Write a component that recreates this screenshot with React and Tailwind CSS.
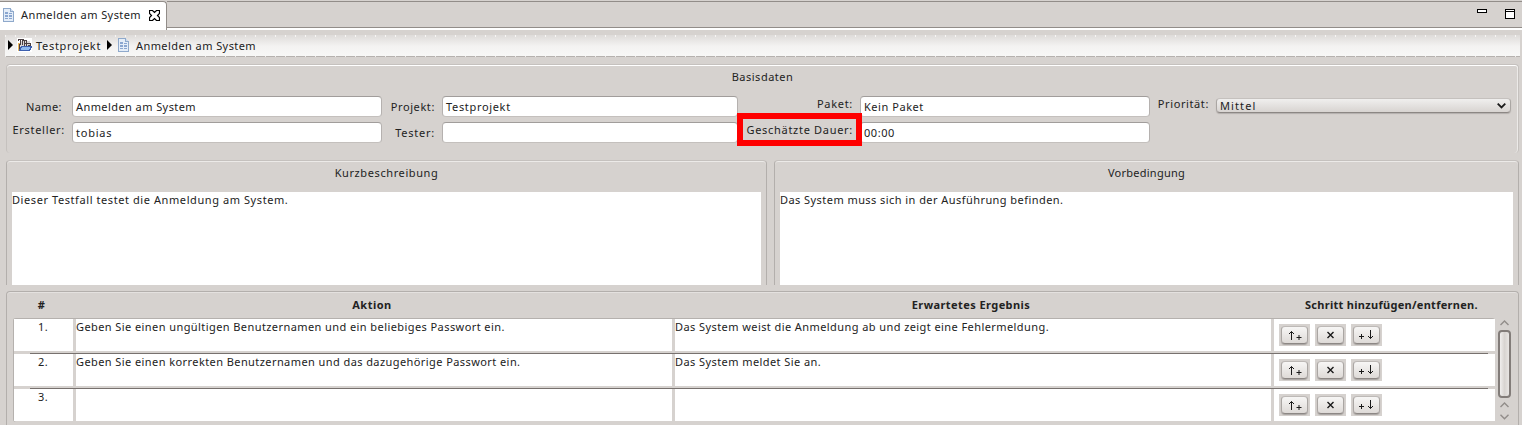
const LINE = 'whitespace-pre leading-[16px]';

function Doc() {
  return (
    <svg width="11" height="14" viewBox="0 0 11 14" shapeRendering="crispEdges" className="shrink-0">
      <path d="M0.5 0.5H7.5L10.5 3.5V13.5H0.5Z" fill="#e4edf8" stroke="#8fa9cb" />
      <path d="M7.5 0.5V3.5H10.5" fill="#c9d9ee" stroke="#8fa9cb" />
      <path d="M2 4h3v2h-3zM6 5h3v1h-3zM2 7h3v2h-3zM6 7h3v2h-3zM2 10h3v1h-3zM6 10h3v1h-3z" fill="#8aa6d0" />
    </svg>
  );
}

function Folder() {
  return (
    <svg width="15" height="14" viewBox="0 0 15 14" shapeRendering="crispEdges" className="shrink-0">
      <rect width="15" height="14" fill="#fff" />
      <path d="M1 5h2v8h-2z" fill="#e8b860" />
      <path d="M3 3h10v6h-10z" fill="#d9d4d4" />
      <path d="M1 1h6v1h-6zM1 1h1v2h-1zM3 2h1v5h-1zM5 2h5v1h-5zM5 3h1v4h-1zM7 3h1v5h-1zM8 5h6v1h-6zM9 3h1v5h-1zM13 5h1v3h-1zM11 7h2v1h-2zM2 6h1v7h-1z" fill="#4a3f42" />
      <path d="M4.500 8.500H14.500L12.500 12.500H2.500Z" fill="#8db8ee" stroke="#3c5fae" />
    </svg>
  );
}

function Arrow() {
  return (
    <svg width="5" height="10" viewBox="0 0 5 10" className="shrink-0">
      <path d="M0 0L5 5L0 10Z" fill="#000" />
    </svg>
  );
}

function Input({ children, className }) {
  return (
    <div className={`h-[21px] rounded-[4px] border border-t-[#a19d9b] border-x-[#b5b1af] border-b-[#c4c0bd] bg-white pl-[3px] pt-[2px] ${className}`}>
      <div className={LINE}>{children}</div>
    </div>
  );
}

function Label({ children, className }) {
  return <div className={`${LINE} text-right ${className}`}>{children}</div>;
}

function Description({ title, titleClass, textClass, children, className }) {
  return (
    <section className={`h-[125px] rounded-t-[4px] border-x border-t border-x-[#b3afac] border-t-[#c5c1be] px-[5px] shadow-[inset_0_1px_0_#eceae8] ${className}`}>
      <h2 className={`${LINE} h-[31px] pt-[4px] text-center ${titleClass}`}>{title}</h2>
      <div className="h-[93px] bg-white">
        <p className={`${LINE} ${textClass}`}>{children}</p>
      </div>
    </section>
  );
}

function StepButton({ children }) {
  return (
    <div className="h-[22px] w-[31px] bg-[#d6d2cf] px-[2px] pt-[2px]">
      <button className="flex h-[18px] w-[27px] items-center justify-center rounded-[4px] border border-x-[#aaa6a3] border-t-[#bdb9b6] border-b-[#8c8784] bg-linear-to-b from-[#f7f6f5] to-[#dedad7] shadow-[0_1px_1px_#a8a4a1]">
        <svg width="16" height="12" viewBox="0 0 16 12" fill="none" stroke="#1a1a1a">
          {children}
        </svg>
      </button>
    </div>
  );
}

function Row({ n, action, result, last }) {
  return (
    <div className={`relative flex gap-[3px] ${last ? 'h-[32px]' : 'h-[35px] border-b-[3px] border-[#d6d2cf]'}`}>
      <div className={`${LINE} w-[59px] bg-white pr-[1px] text-center`}>{n}</div>
      <div className={`${LINE} w-[596px] bg-white`}>{action}</div>
      <div className={`${LINE} w-[596px] bg-white`}>{result}</div>
      <div className="flex flex-1 gap-[5px] bg-white pl-[5px] pt-[5px]">
        <StepButton>
          <path d="M4.500 11V2.500M2 5L4.500 2.500L7 5M9.500 8.500H14.500M12 6V11" />
        </StepButton>
        <StepButton>
          <path d="M4.500 3L10.500 9M10.500 3L4.500 9" strokeWidth="1.400" />
        </StepButton>
        <StepButton>
          <path d="M11.500 1V9.500M9 7L11.500 9.500L14 7M0 7.500H5M2.500 5V10" />
        </StepButton>
      </div>
      {!last && <div className="absolute top-[34px] left-[16px] h-px w-[1458px] bg-[#77716e]" />}
    </div>
  );
}

function Chevron({ down }) {
  return (
    <svg width="9" height="6" viewBox="0 0 9 6" fill="none" stroke="#928d8a" strokeWidth="1.400">
      <path d={down ? 'M0.500 0.700L4.500 4.700L8.500 0.700' : 'M0.500 5L4.500 1L8.500 5'} />
    </svg>
  );
}

export default function App() {
  return (
    <div className="flex h-[425px] w-[1522px] flex-col overflow-hidden bg-[#d6d2cf] font-['Noto_Sans',sans-serif] text-[11px] tracking-[0.42px] text-[#222]">
      <header className="mt-px flex h-[29px] shrink-0">
        <div className="flex w-[167px] rounded-tr-[4px] border-t border-r border-[#928d89] bg-white pl-[3px] pt-[5px]">
          <div className="mt-[1px]"><Doc /></div>
          <span className={`${LINE} ml-[7px] w-[128px]`}>Anmelden am System</span>
          <svg width="11" height="11" viewBox="0 0 11 11" className="mt-[3px]" fill="#fff" stroke="#000" strokeWidth="1.200">
            <path d="M0.500 0.500H3.500L5.500 2.500L7.500 0.500H10.500V3.500L8.500 5.500L10.500 7.500V10.500H7.500L5.500 8.500L3.500 10.500H0.500V7.500L2.500 5.500L0.500 3.500Z" />
          </svg>
        </div>
        <div className="flex h-[29px] flex-1 flex-col border-t border-[#928d89]">
          <div className="flex h-[26px] justify-end border-b border-[#928d89] pr-[7px]">
            <svg width="38" height="12" viewBox="0 0 38 12" className="mt-[6px]" shapeRendering="crispEdges" fill="#fff" stroke="#000">
              <rect x="0.500" y="1.500" width="9" height="3" />
              <rect x="28.500" y="1.500" width="9" height="9" />
              <path d="M28 3.500H38" />
            </svg>
          </div>
          <div className="h-[2px] bg-white" />
        </div>
      </header>

      <nav className="mt-[5px] ml-[5px] flex h-[22px] w-[1515px] shrink-0 flex-col bg-linear-to-b from-[#dedbd9] via-[#f3f2f1] to-[#f8f8f7]">
        <div className="h-[2px] bg-[repeating-linear-gradient(90deg,#f6f5f4_0_1px,transparent_1px_10px)]" />
        <div className="flex h-[19px] pl-[3px]">
          <div className="mt-[3px] flex"><Arrow /></div>
          <div className="mt-[1px] ml-[4px]"><Folder /></div>
          <span className={`${LINE} mt-[1px] ml-[4px] w-[71px] tracking-[0.7px]`}>Testprojekt</span>
          <div className="mt-[3px] flex"><Arrow /></div>
          <div className="mt-[1px] ml-[6px]"><Doc /></div>
          <span className={`${LINE} mt-[1px] ml-[7px]`}>Anmelden am System</span>
        </div>
        <div className="h-px bg-[repeating-linear-gradient(90deg,#eeeceb_0_1px,#b5b1ae_1px_10px)]" />
      </nav>

      <section className="mt-[7px] ml-[6px] h-[89px] w-[1513px] shrink-0 rounded-[4px] border-x border-t border-[#c5c1be] shadow-[inset_0_1px_0_#fff,inset_-1px_0_0_#eceae8]">
        <h2 className={`${LINE} pt-[4px] text-center tracking-[0.5px]`}>Basisdaten</h2>
        <div className="mt-[11px] flex">
          <div className="flex w-[58px] flex-col">
            <Label className="mt-[3px] pr-[3px]">Name:</Label>
            <Label className="mt-[7px] tracking-[0.7px]">Ersteller:</Label>
          </div>
          <div className="ml-[7px] flex flex-col gap-[5px]">
            <Input className="w-[310px]">Anmelden am System</Input>
            <Input className="w-[310px] tracking-[0.75px]">tobias</Input>
          </div>
          <div className="w-[53px] tracking-[0.6px]">
            <Label className="mt-[3px]">Projekt:</Label>
            <Label className="mt-[10px] tracking-[0.75px]">Tester:</Label>
          </div>
          <div className="ml-[7px] flex flex-col gap-[5px]">
            <Input className="w-[296px] tracking-[0.67px]">Testprojekt</Input>
            <Input className="w-[296px]" />
          </div>
          <div className="relative w-[115px] tracking-[0.7px]">
            <Label>Paket:</Label>
            <Label className="mt-[10px]">Geschätzte Dauer:</Label>
            <div className="absolute top-[17px] left-[-1px] z-10 h-[33px] w-[125px] border-[6px] border-[#f00]" />
          </div>
          <div className="ml-[7px] flex flex-col gap-[5px] tracking-[0.55px]">
            <Input className="w-[290px]">Kein Paket</Input>
            <Input className="w-[290px]">00:00</Input>
          </div>
          <Label className="w-[59px] tracking-[0.6px]">Priorität:</Label>
          <div className="mt-[2px] ml-[7px] flex h-[15px] w-[295px] items-center justify-between rounded-[4px] border border-x-[#aaa6a3] border-t-[#c5c1be] border-b-[#8c8784] bg-linear-to-b from-[#f0efee] to-[#d8d4d1] pr-[4px] pl-[3px] shadow-[0_1px_1px_#b3afac]">
            <span className={`${LINE} tracking-[1.1px]`}>Mittel</span>
            <svg width="9" height="6" viewBox="0 0 9 6" fill="none" stroke="#1a1a1a" strokeWidth="1.800">
              <path d="M0.700 0.700L4.500 4.500L8.300 0.700" />
            </svg>
          </div>
        </div>
      </section>

      <div className="mt-[7px] ml-[6px] flex shrink-0 gap-[7px]">
        <Description title="Kurzbeschreibung" className="w-[761px]" titleClass="tracking-[0.6px]" textClass="tracking-[0.58px]">
          Dieser Testfall testet die Anmeldung am System.
        </Description>
        <Description title="Vorbedingung" className="w-[745px]" titleClass="tracking-[0.25px]" textClass="tracking-[0.44px]">
          Das System muss sich in der Ausführung befinden.
        </Description>
      </div>

      <section className="mt-[6px] ml-[6px] h-[140px] w-[1513px] shrink-0 rounded-t-[4px] border-x border-t border-[#b3afac] pl-[6px] shadow-[inset_0_1px_0_#e4e1df]">
        <div className="flex h-[26px] pt-[5px] font-bold">
          <div className={`${LINE} w-[57px] text-center`}>#</div>
          <div className={`${LINE} w-[604px] text-center tracking-[0.5px]`}>Aktion</div>
          <div className={`${LINE} w-[594px] text-center`}>Erwartetes Ergebnis</div>
          <div className={`${LINE} ml-[37px] tracking-[0.29px]`}>Schritt hinzufügen/entfernen.</div>
        </div>
        <div className="flex">
          <div className="h-[104px] w-[1482px] rounded-[3px] border-t border-l border-[#b5b1ae]">
            <Row n="1." action="Geben Sie einen ungültigen Benutzernamen und ein beliebiges Passwort ein." result="Das System weist die Anmeldung ab und zeigt eine Fehlermeldung." />
            <Row n="2." action="Geben Sie einen korrekten Benutzernamen und das dazugehörige Passwort ein." result="Das System meldet Sie an." />
            <Row n="3." last />
          </div>
          <div className="ml-[3px] flex w-[13px] flex-col items-center pt-[2px]">
            <Chevron />
            <div className="mt-[4px] h-[68px] w-[13px] shrink-0 rounded-[4px] border-2 border-[#827c79] bg-linear-to-r from-[#f0eeed] via-[#d8d4d1] to-[#e8e5e3]" />
            <div className="mt-[4px] flex flex-col gap-[6px]">
              <Chevron />
              <Chevron down />
            </div>
          </div>
        </div>
      </section>
    </div>
  );
}
